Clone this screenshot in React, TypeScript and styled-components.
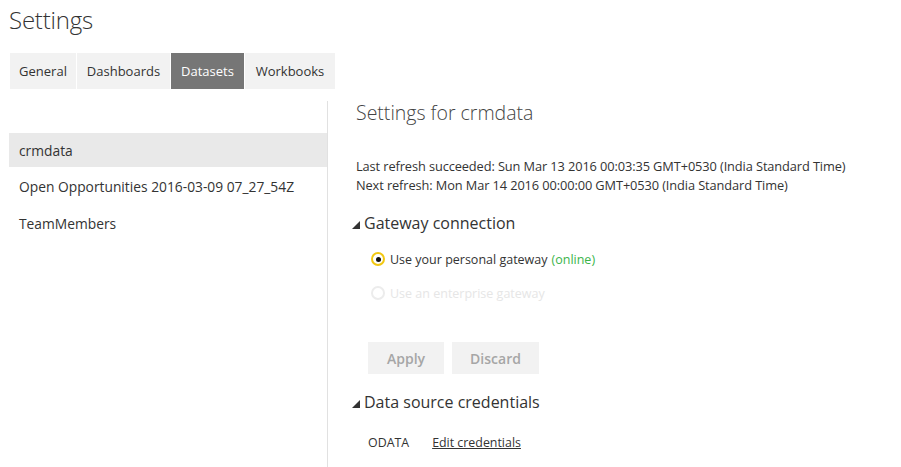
import React, { useState } from 'react';
import styled, { createGlobalStyle } from 'styled-components';

const GlobalStyle = createGlobalStyle`
	body {
		margin: 0;
		background: #ffffff;
		font-family: 'Open Sans', 'Noto Sans', sans-serif;
		color: #333333;
	}
`;

const Page = styled.div`
	width: 901px;
	height: 467px;
	overflow: hidden;
	padding: 0 0 0 9px;
	box-sizing: border-box;
`;

const Title = styled.h1`
	margin: 0;
	padding-top: 3px;
	height: 53px;
	box-sizing: border-box;
	font-size: 24px;
	font-weight: 300;
	color: #333;
	letter-spacing: -0.2px;
`;

const TabBar = styled.div`
	display: flex;
	gap: 1px;
	margin-left: 1px;
	height: 36px;
`;

const Tab = styled.div<{ $active?: boolean; $width: number }>`
	width: ${(p) => p.$width}px;
	display: flex;
	align-items: center;
	justify-content: center;
	font-size: 13px;
	background: ${(p) => (p.$active ? '#767676' : '#f2f2f2')};
	color: ${(p) => (p.$active ? '#ffffff' : '#333333')};
	cursor: pointer;
`;

const Body = styled.div`
	display: flex;
	margin-top: 12px;
`;

const LeftPanel = styled.div`
	width: 319px;
	border-right: 1px solid #e1e1e1;
	height: 366px;
	padding-top: 32px;
	box-sizing: border-box;
`;

const ListItem = styled.div<{ $selected?: boolean }>`
	height: 34px;
	margin-bottom: 2.5px;
	display: flex;
	align-items: center;
	padding-left: 10px;
	font-size: 13.8px;
	background: ${(p) => (p.$selected ? '#e9e9e9' : 'transparent')};
	cursor: pointer;
`;

const RightPanel = styled.div`
	flex: 1;
	padding-left: 28px;
`;

const PanelTitle = styled.h2`
	margin: 0;
	padding-top: 0;
	margin-top: -2px;
	font-size: 19.5px;
	font-weight: 300;
	color: #444;
	height: 58px;
`;

const RefreshLine = styled.div`
	font-size: 12.8px;
	line-height: 19px;
	letter-spacing: -0.1px;
`;

const SectionHeader = styled.div<{ $top: number }>`
	display: flex;
	align-items: center;
	margin-left: -4px;
	margin-top: ${(p) => p.$top}px;
	font-size: 16px;
	color: #333;
	height: 24px;
`;

const Caret = styled.svg`
	width: 8px;
	height: 8px;
	margin-right: 4px;
	margin-top: 3px;
`;

const RadioRow = styled.label<{ $disabled?: boolean }>`
	display: flex;
	align-items: center;
	margin-left: 15px;
	height: 20px;
	font-size: 12.5px;
	color: ${(p) => (p.$disabled ? '#e6e6e6' : '#333')};
`;

const RadioDot = styled.span<{ $checked?: boolean; $disabled?: boolean }>`
	width: 10px;
	height: 10px;
	border-radius: 50%;
	border: 2px solid ${(p) => (p.$disabled ? '#ececec' : '#f2c811')};
	margin-right: 5px;
	display: flex;
	align-items: center;
	justify-content: center;
	&::after {
		content: '';
		width: 5px;
		height: 5px;
		border-radius: 50%;
		background: ${(p) => (p.$checked ? '#111' : 'transparent')};
	}
`;

const Online = styled.span`
	color: #3bb44a;
	margin-left: 4px;
`;

const ButtonRow = styled.div`
	display: flex;
	gap: 8px;
	margin-left: 12px;
	margin-top: 39px;
`;

const Button = styled.button<{ $width: number }>`
	width: ${(p) => p.$width}px;
	height: 32px;
	border: none;
	background: #f2f2f2;
	color: #a6a6a6;
	font-family: inherit;
	font-size: 14px;
	font-weight: 600;
	padding: 0;
`;

const CredRow = styled.div`
	display: flex;
	align-items: center;
	margin-left: 12px;
	margin-top: 20px;
	font-size: 12.4px;
	gap: 23px;
`;

const EditLink = styled.a`
	color: #333;
	text-decoration: underline;
	cursor: pointer;
`;

const Spacer = styled.div<{ $h: number }>`
	height: ${(p) => p.$h}px;
`;

const tabs = [
	{ label: 'General', width: 66 },
	{ label: 'Dashboards', width: 93 },
	{ label: 'Datasets', width: 73 },
	{ label: 'Workbooks', width: 90 },
];

const datasets = ['crmdata', 'Open Opportunities 2016-03-09 07_27_54Z', 'TeamMembers'];

const Triangle = () => (
	<Caret viewBox="0 0 8 8">
		<polygon points="8,0 8,8 0,8" fill="#333" />
	</Caret>
);

const App: React.FC = () => {
	const [tab, setTab] = useState('Datasets');
	const [selected, setSelected] = useState('crmdata');

	return (
		<>
			<GlobalStyle />
			<Page>
				<Title>Settings</Title>
				<TabBar>
					{tabs.map((t) => (
						<Tab
							key={t.label}
							$width={t.width}
							$active={tab === t.label}
							onClick={() => setTab(t.label)}>
							{t.label}
						</Tab>
					))}
				</TabBar>
				<Body>
					<LeftPanel>
						{datasets.map((d) => (
							<ListItem key={d} $selected={selected === d} onClick={() => setSelected(d)}>
								{d}
							</ListItem>
						))}
					</LeftPanel>
					<RightPanel>
						<PanelTitle>Settings for {selected}</PanelTitle>
						<RefreshLine>
							Last refresh succeeded: Sun Mar 13 2016 00:03:35 GMT+0530 (India Standard Time)
						</RefreshLine>
						<RefreshLine>
							Next refresh: Mon Mar 14 2016 00:00:00 GMT+0530 (India Standard Time)
						</RefreshLine>
						<SectionHeader $top={16}>
							<Triangle />
							Gateway connection
						</SectionHeader>
						<Spacer $h={14} />
						<RadioRow>
							<RadioDot $checked />
							Use your personal gateway
							<Online>(online)</Online>
						</RadioRow>
						<Spacer $h={14} />
						<RadioRow $disabled>
							<RadioDot $disabled />
							Use an enterprise gateway
						</RadioRow>
						<ButtonRow>
							<Button $width={76}>Apply</Button>
							<Button $width={87}>Discard</Button>
						</ButtonRow>
						<SectionHeader $top={16}>
							<Triangle />
							Data source credentials
						</SectionHeader>
						<CredRow>
							<span>ODATA</span>
							<EditLink>Edit credentials</EditLink>
						</CredRow>
					</RightPanel>
				</Body>
			</Page>
		</>
	);
};

export default App;
